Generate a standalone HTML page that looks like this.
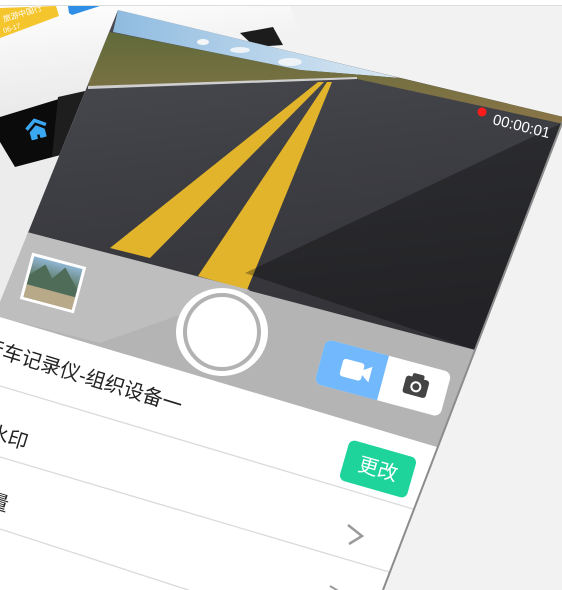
<!DOCTYPE html>
<html><head><meta charset="utf-8"><style>
html,body{margin:0;padding:0;background:#f2f2f2;width:562px;height:590px;overflow:hidden}
svg{display:block}
text{font-family:"Liberation Sans","Noto Sans CJK SC",sans-serif}
</style></head><body>
<svg width="562" height="590" viewBox="0 0 562 590" xmlns="http://www.w3.org/2000/svg">
<defs>
<linearGradient id="card" x1="0" y1="0" x2="0.3" y2="1">
<stop offset="0" stop-color="#ffffff"/><stop offset="0.5" stop-color="#f2f2f2"/><stop offset="1" stop-color="#e8e8e8"/></linearGradient>
<linearGradient id="road" x1="0" y1="0" x2="0.2" y2="1">
<stop offset="0" stop-color="#4d4e54"/><stop offset="0.5" stop-color="#3e3f44"/><stop offset="1" stop-color="#333338"/></linearGradient>
<linearGradient id="sky" x1="0" y1="0" x2="1" y2="0">
<stop offset="0" stop-color="#8fbbe0"/><stop offset="1" stop-color="#dbe9f3"/></linearGradient>
<linearGradient id="grass" x1="0" y1="0" x2="0" y2="1">
<stop offset="0" stop-color="#5f6a3a"/><stop offset="1" stop-color="#8a7548"/></linearGradient>
<linearGradient id="thumb" x1="0" y1="0" x2="0" y2="1">
<stop offset="0" stop-color="#8fb5d2"/><stop offset="0.45" stop-color="#5f7d6a"/><stop offset="1" stop-color="#a69a6a"/></linearGradient>
<clipPath id="phone"><polygon points="118,10 564,117 383,590 0,590 0,302"/></clipPath>
</defs>
<rect x="0" y="0" width="562" height="5" fill="#ffffff"/>
<rect x="0" y="5" width="562" height="1" fill="#dddddd"/>
<polygon points="0,6 290,6 300,30 85,93 0,117" fill="url(#card)"/>
<polygon points="0,117 85,92 150,120 120,230 0,300" fill="#ececec"/>
<polygon points="0,8 56,6 59,16 0,38" fill="#f4c52c"/>
<text x="4" y="22" font-size="8" fill="#fff" transform="rotate(-17 4 22)">旅游中国行</text>
<text x="4" y="33" font-size="7" fill="#fff" transform="rotate(-17 4 33)">06-17</text>
<polygon points="68,6 100,6 72,15 69,13" fill="#2f8fe6"/>
<polygon points="240,33 273,27 283,45 255,47" fill="#1c1c1c"/>
<polygon points="0,117 85,91 68,153 15,167 0,142" fill="#0b0b0b"/>
<polygon points="58,97 85,91 68,153 52,157" fill="#1e1e1e"/>
<g transform="translate(37,130) rotate(-15)" fill="none" stroke="#3aa8f0" stroke-width="3.5" stroke-linejoin="round">
<path d="M-10,-3 L0,-10 L10,-3"/>
<path d="M-7,8 L-7,1 L0,-4 L7,1 L7,8 L2,8 L2,4 L-2,4 L-2,8 Z" fill="#3aa8f0" stroke-width="1.5"/>
</g>
<g clip-path="url(#phone)">
<rect x="0" y="0" width="600" height="600" fill="#ffffff"/>
<polygon points="118,10 564,117 475,350 0,230" fill="url(#road)"/>
<polygon points="118,10 400,78 300,70 113,32" fill="url(#sky)"/>
<ellipse cx="203" cy="42" rx="6" ry="3" fill="#f4f6f8"/>
<ellipse cx="240" cy="50" rx="10" ry="3" fill="#eef3f7"/>
<ellipse cx="290" cy="62" rx="12" ry="4" fill="#eef3f7"/>
<polygon points="100,30 300,70 400,78 564,117 564,124 357,79 88,87" fill="url(#grass)"/>
<polygon points="88,86 357,77 357,79 88,89" fill="#cfcfcf"/>
<polygon points="318,82 324,82 150,258 110,248" fill="#e2b42c"/>
<polygon points="327,82 332,82 247,290 198,276" fill="#e2b42c"/>
<polygon points="564,122 475,350 245,273" fill="#000" opacity="0.3"/>
<circle cx="482" cy="112" r="4.5" fill="#ff1b1b"/>
<text x="492" y="124" font-size="15" fill="#ffffff" transform="rotate(14 492 124)">00:00:01</text>
<polygon points="0,225 475,350 437,447 0,317" fill="#b4b4b4"/>
<polygon points="0,225 250,290 100,343 0,317" fill="#bebebe"/>
<g transform="translate(53,283) rotate(15)">
<rect x="-28" y="-24" width="56" height="48" fill="#fff"/>
<rect x="-25" y="-21" width="50" height="42" fill="url(#thumb)"/>
<polygon points="-25,-2 -12,-16 -2,-4 8,-18 25,0 25,8 -25,8" fill="#4e6c58"/>
<rect x="-25" y="8" width="50" height="13" fill="#b8a988"/>
</g>
<ellipse cx="222" cy="332" rx="46" ry="44" fill="#ffffff"/>
<circle cx="222" cy="332" r="37" fill="none" stroke="#b2b2b2" stroke-width="4"/>
<g transform="translate(383,378) rotate(15)">
<rect x="-65" y="-23" width="130" height="46" rx="7" fill="#ffffff"/>
<path d="M-58,-23 H0 V23 H-58 A7,7 0 0 1 -65,16 V-16 A7,7 0 0 1 -58,-23 Z" fill="#72b8fc"/>
<rect x="-43" y="-9" width="22" height="18" rx="3" fill="#fff"/>
<polygon points="-22,-2 -13,-8 -13,8 -22,2" fill="#fff"/>
<rect x="22" y="-9" width="24" height="18" rx="3" fill="#444"/>
<rect x="28" y="-13" width="12" height="6" rx="2" fill="#444"/>
<circle cx="34" cy="0" r="5.5" fill="#fff"/>
<circle cx="34" cy="0" r="3.5" fill="#444"/>
</g>
<line x1="0" y1="386" x2="450" y2="520" stroke="#dadada" stroke-width="1.3"/>
<line x1="0" y1="457" x2="450" y2="590" stroke="#dadada" stroke-width="1.3"/>
<line x1="0" y1="529" x2="250" y2="610" stroke="#dadada" stroke-width="1.3"/>
<text x="-18" y="352" font-size="20" fill="#222" transform="rotate(17 -18 352)">行车记录仪-组织设备一</text>
<text x="-32" y="432" font-size="20" fill="#222" transform="rotate(17 -32 432)">加水印</text>
<text x="-32" y="500" font-size="20" fill="#222" transform="rotate(17 -32 500)">质量</text>
<g transform="translate(378,469) rotate(16)">
<rect x="-35" y="-21" width="70" height="42" rx="6" fill="#1ed49b"/>
<text x="0" y="7" font-size="20" fill="#fff" text-anchor="middle">更改</text>
</g>
<polyline points="348,525 362,536 349,544" fill="none" stroke="#9a9a9a" stroke-width="2.5"/>
<polyline points="330,586 340,592" fill="none" stroke="#9a9a9a" stroke-width="2"/>
</g>
<line x1="564" y1="118" x2="383" y2="590" stroke="#8c8c8c" stroke-width="2"/>
</svg>
</body></html>
